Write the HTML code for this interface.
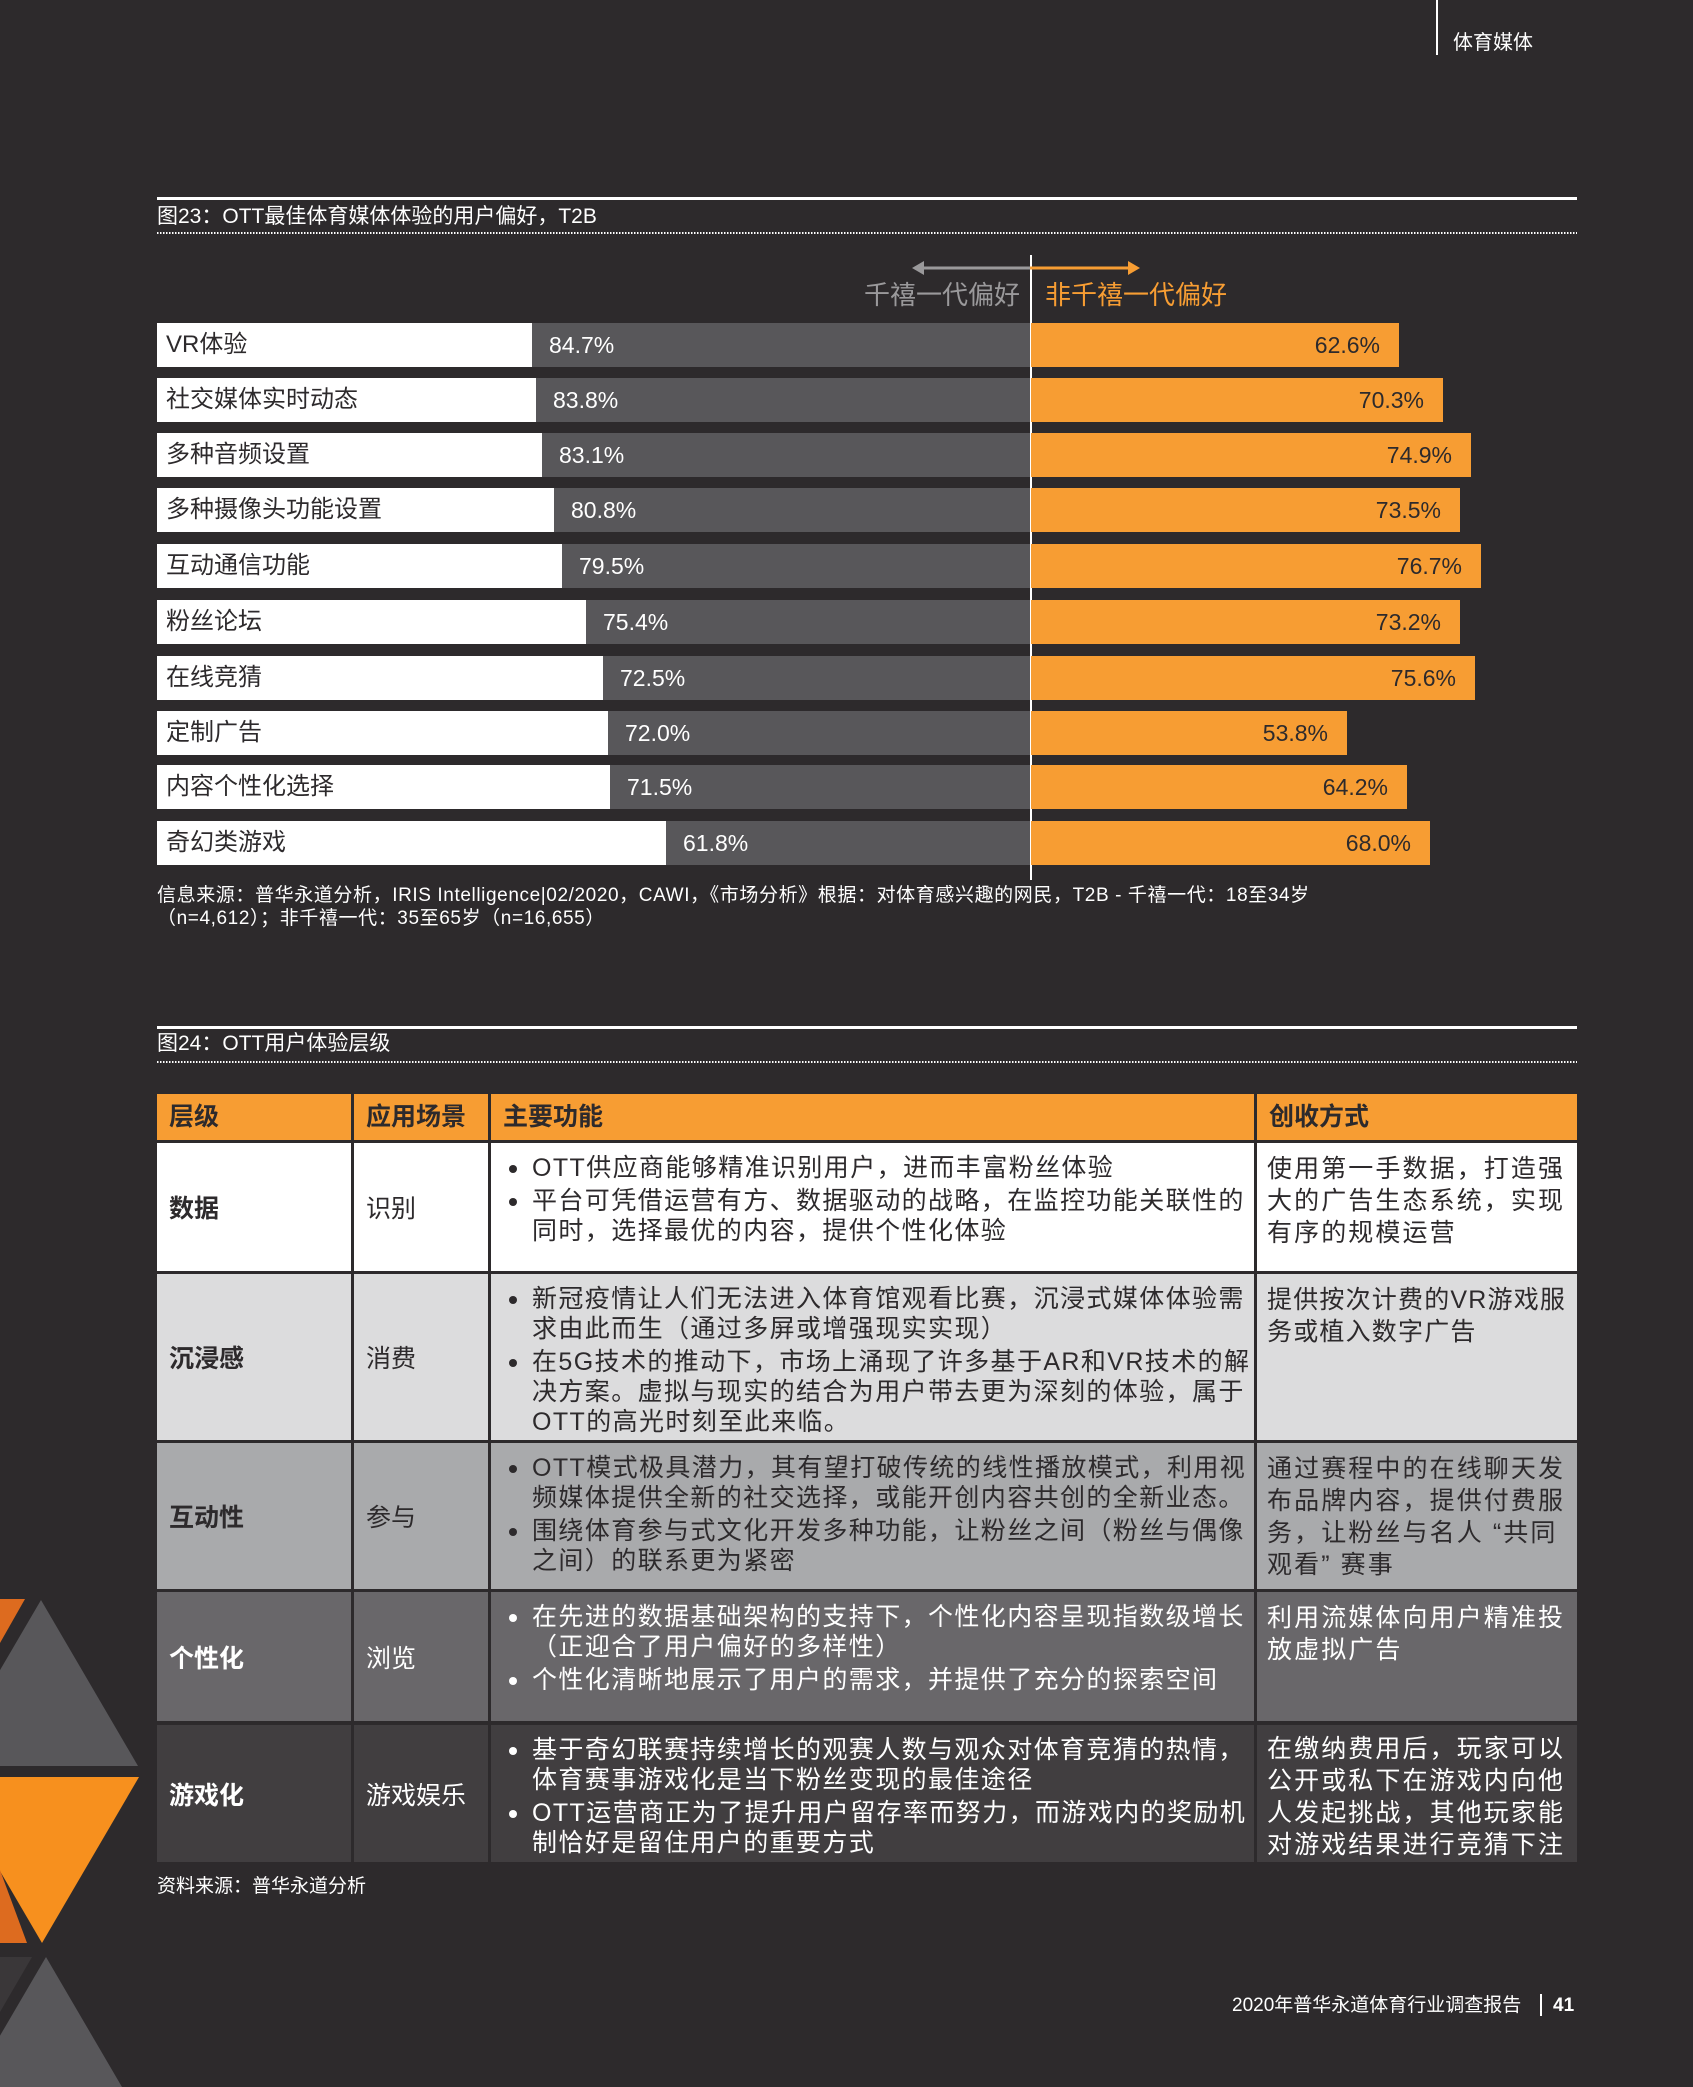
<!DOCTYPE html>
<html><head><meta charset="utf-8"><style>
*{margin:0;padding:0;box-sizing:border-box}
body{width:1693px;height:2087px;background:#2d2a2c;position:relative;overflow:hidden;font-family:"Liberation Sans","Noto Sans CJK SC",sans-serif;color:#fff}
.a{position:absolute}
.lbl{position:absolute;left:157px;background:#fff;color:#2d2a2c;font-size:24px;height:44px;line-height:44px;padding-left:9px;white-space:nowrap}
.gr{position:absolute;background:#58575a;height:44px;line-height:44px;font-size:23px;padding-left:17px;color:#fff}
.or{position:absolute;left:1031px;background:#f79d33;height:44px;line-height:44px;font-size:23px;text-align:right;padding-right:19px;color:#2d2a2c}
.c{position:absolute;color:#2d2a2c;font-size:25px;overflow:hidden}
.h{background:#f79d33;font-weight:bold;font-size:25px;line-height:46px;padding-left:12px}
.v{display:flex;align-items:center;padding-left:12px}
.b{font-weight:bold}
.f{padding:10px 8px 0 16px;line-height:30px;letter-spacing:1.4px;white-space:nowrap}
.f p{position:relative;padding-left:25px;margin-bottom:3px}
.f p:before{content:"";position:absolute;left:2px;top:12px;width:8px;height:8px;border-radius:50%;background:currentColor}
.m{padding:10px 2px 0 10px;line-height:32px;letter-spacing:2.1px;white-space:nowrap}
.dot{position:absolute;left:157px;width:1420px;height:2px;background-image:linear-gradient(90deg,#fff 50%,transparent 50%);background-size:3px 2px}
</style></head><body>
<div class="a" style="left:1436px;top:0;width:2px;height:55px;background:#fff"></div>
<div class="a" style="left:1453px;top:30px;font-size:20px;line-height:26px">体育媒体</div>

<div class="a" style="left:157px;top:197px;width:1420px;height:3px;background:#fff"></div>
<div class="a" style="left:157px;top:203px;font-size:21px;line-height:28px">图23：OTT最佳体育媒体体验的用户偏好，T2B</div>
<div class="dot" style="top:232px"></div>

<div class="a" style="left:1030px;top:255px;width:2px;height:625px;background:#fff"></div>
<svg class="a" style="left:910px;top:258px" width="235" height="20"><line x1="12" y1="10" x2="120" y2="10" stroke="#9a999b" stroke-width="3"/><polygon points="2,10 14,3 14,17" fill="#9a999b"/><line x1="120" y1="10" x2="220" y2="10" stroke="#f79d33" stroke-width="3"/><polygon points="230,10 218,3 218,17" fill="#f79d33"/></svg>
<div class="a" style="right:673px;top:278px;font-size:26px;color:#9a999b;line-height:34px">千禧一代偏好</div>
<div class="a" style="left:1045px;top:278px;font-size:26px;color:#f79d33;line-height:34px">非千禧一代偏好</div>

<div class="lbl" style="top:323px;width:375px">VR体验</div><div class="gr" style="top:323px;left:532px;width:498px">84.7%</div><div class="or" style="top:323px;width:368px">62.6%</div>
<div class="lbl" style="top:378px;width:379px">社交媒体实时动态</div><div class="gr" style="top:378px;left:536px;width:494px">83.8%</div><div class="or" style="top:378px;width:412px">70.3%</div>
<div class="lbl" style="top:433px;width:385px">多种音频设置</div><div class="gr" style="top:433px;left:542px;width:488px">83.1%</div><div class="or" style="top:433px;width:440px">74.9%</div>
<div class="lbl" style="top:488px;width:397px">多种摄像头功能设置</div><div class="gr" style="top:488px;left:554px;width:476px">80.8%</div><div class="or" style="top:488px;width:429px">73.5%</div>
<div class="lbl" style="top:544px;width:405px">互动通信功能</div><div class="gr" style="top:544px;left:562px;width:468px">79.5%</div><div class="or" style="top:544px;width:450px">76.7%</div>
<div class="lbl" style="top:600px;width:429px">粉丝论坛</div><div class="gr" style="top:600px;left:586px;width:444px">75.4%</div><div class="or" style="top:600px;width:429px">73.2%</div>
<div class="lbl" style="top:656px;width:446px">在线竞猜</div><div class="gr" style="top:656px;left:603px;width:427px">72.5%</div><div class="or" style="top:656px;width:444px">75.6%</div>
<div class="lbl" style="top:711px;width:451px">定制广告</div><div class="gr" style="top:711px;left:608px;width:422px">72.0%</div><div class="or" style="top:711px;width:316px">53.8%</div>
<div class="lbl" style="top:765px;width:453px">内容个性化选择</div><div class="gr" style="top:765px;left:610px;width:420px">71.5%</div><div class="or" style="top:765px;width:376px">64.2%</div>
<div class="lbl" style="top:821px;width:509px">奇幻类游戏</div><div class="gr" style="top:821px;left:666px;width:364px">61.8%</div><div class="or" style="top:821px;width:399px">68.0%</div>

<div class="a" style="left:157px;top:884px;font-size:19px;letter-spacing:0.6px;line-height:23px;white-space:nowrap">信息来源：普华永道分析，IRIS Intelligence|02/2020，CAWI，《市场分析》根据：对体育感兴趣的网民，T2B - 千禧一代：18至34岁<br>（n=4,612）；非千禧一代：35至65岁（n=16,655）</div>

<div class="a" style="left:157px;top:1026px;width:1420px;height:3px;background:#fff"></div>
<div class="a" style="left:157px;top:1030px;font-size:21px;line-height:28px">图24：OTT用户体验层级</div>
<div class="dot" style="top:1061px"></div>

<div class="c h" style="left:157px;top:1094px;width:194px;height:46px">层级</div>
<div class="c h" style="left:354px;top:1094px;width:134px;height:46px">应用场景</div>
<div class="c h" style="left:491px;top:1094px;width:763px;height:46px">主要功能</div>
<div class="c h" style="left:1257px;top:1094px;width:320px;height:46px">创收方式</div>

<div class="c v b" style="left:157px;top:1143px;width:194px;height:128px;background:#fff">数据</div>
<div class="c v" style="left:354px;top:1143px;width:134px;height:128px;background:#fff">识别</div>
<div class="c f" style="left:491px;top:1143px;width:763px;height:128px;background:#fff"><p>OTT供应商能够精准识别用户，进而丰富粉丝体验</p><p>平台可凭借运营有方、数据驱动的战略，在监控功能关联性的<br>同时，选择最优的内容，提供个性化体验</p></div>
<div class="c m" style="left:1257px;top:1143px;width:320px;height:128px;background:#fff">使用第一手数据，打造强<br>大的广告生态系统，实现<br>有序的规模运营</div>

<div class="c v b" style="left:157px;top:1274px;width:194px;height:166px;background:#dcdcdd">沉浸感</div>
<div class="c v" style="left:354px;top:1274px;width:134px;height:166px;background:#dcdcdd">消费</div>
<div class="c f" style="left:491px;top:1274px;width:763px;height:166px;background:#dcdcdd"><p>新冠疫情让人们无法进入体育馆观看比赛，沉浸式媒体体验需<br>求由此而生（通过多屏或增强现实实现）</p><p>在5G技术的推动下，市场上涌现了许多基于AR和VR技术的解<br>决方案。虚拟与现实的结合为用户带去更为深刻的体验，属于<br>OTT的高光时刻至此来临。</p></div>
<div class="c m" style="left:1257px;top:1274px;width:320px;height:166px;background:#dcdcdd;letter-spacing:1.2px">提供按次计费的VR游戏服<br>务或植入数字广告</div>

<div class="c v b" style="left:157px;top:1443px;width:194px;height:146px;background:#a9aaac">互动性</div>
<div class="c v" style="left:354px;top:1443px;width:134px;height:146px;background:#a9aaac">参与</div>
<div class="c f" style="left:491px;top:1443px;width:763px;height:146px;background:#a9aaac"><p>OTT模式极具潜力，其有望打破传统的线性播放模式，利用视<br>频媒体提供全新的社交选择，或能开创内容共创的全新业态。</p><p>围绕体育参与式文化开发多种功能，让粉丝之间（粉丝与偶像<br>之间）的联系更为紧密</p></div>
<div class="c m" style="left:1257px;top:1443px;width:320px;height:146px;background:#a9aaac">通过赛程中的在线聊天发<br>布品牌内容，提供付费服<br>务，让粉丝与名人 “共同<br>观看” 赛事</div>

<div class="c v b" style="left:157px;top:1592px;width:194px;height:129px;background:#69676a;color:#fff">个性化</div>
<div class="c v" style="left:354px;top:1592px;width:134px;height:129px;background:#69676a;color:#fff">浏览</div>
<div class="c f" style="left:491px;top:1592px;width:763px;height:129px;background:#69676a;color:#fff"><p>在先进的数据基础架构的支持下，个性化内容呈现指数级增长<br>（正迎合了用户偏好的多样性）</p><p>个性化清晰地展示了用户的需求，并提供了充分的探索空间</p></div>
<div class="c m" style="left:1257px;top:1592px;width:320px;height:129px;background:#69676a;color:#fff">利用流媒体向用户精准投<br>放虚拟广告</div>

<div class="c v b" style="left:157px;top:1725px;width:194px;height:137px;background:#413e40;color:#fff">游戏化</div>
<div class="c v" style="left:354px;top:1725px;width:134px;height:137px;background:#413e40;color:#fff">游戏娱乐</div>
<div class="c f" style="left:491px;top:1725px;width:763px;height:137px;background:#413e40;color:#fff"><p>基于奇幻联赛持续增长的观赛人数与观众对体育竞猜的热情，<br>体育赛事游戏化是当下粉丝变现的最佳途径</p><p>OTT运营商正为了提升用户留存率而努力，而游戏内的奖励机<br>制恰好是留住用户的重要方式</p></div>
<div class="c m" style="left:1257px;top:1725px;width:320px;height:137px;background:#413e40;color:#fff;padding-top:8px">在缴纳费用后，玩家可以<br>公开或私下在游戏内向他<br>人发起挑战，其他玩家能<br>对游戏结果进行竞猜下注</div>

<div class="a" style="left:157px;top:1875px;font-size:19px;line-height:24px">资料来源：普华永道分析</div>

<svg class="a" style="left:0;top:0" width="160" height="2087">
<polygon points="0,1599 25,1599 0,1643" fill="#dd6b1f"/>
<polygon points="41,1600 138,1766 -56,1766" fill="#58575a"/>
<polygon points="-55,1777 139,1777 42,1943" fill="#f7901e"/>
<polygon points="0,1870 27,1943 0,1943" fill="#dd6b1f"/>
<polygon points="0,1957 32,1957 0,2012" fill="#3a3739"/>
<polygon points="46,1957 122,2087 -30,2087" fill="#58575a"/>
</svg>

<div class="a" style="left:1232px;top:1994px;font-size:19px;line-height:24px;white-space:nowrap">2020年普华永道体育行业调查报告</div>
<div class="a" style="left:1540px;top:1994px;width:2px;height:22px;background:#fff"></div>
<div class="a" style="left:1553px;top:1994px;font-size:19px;line-height:24px;font-weight:bold">41</div>
</body></html>
